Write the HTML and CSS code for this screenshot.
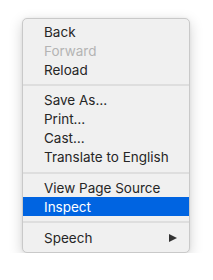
FILE: index.html
```html
<!DOCTYPE html>
<html>
<head>
<meta charset="utf-8">
<link rel="stylesheet" href="styles.css">
</head>
<body>
<div class="page">
  <div class="menu">
    <div class="item">Back</div>
    <div class="item disabled">Forward</div>
    <div class="item">Reload</div>
    <div class="sep"></div>
    <div class="item">Save As…</div>
    <div class="item">Print…</div>
    <div class="item">Cast…</div>
    <div class="item">Translate to English</div>
    <div class="sep"></div>
    <div class="item">View Page Source</div>
    <div class="item active">Inspect</div>
    <div class="sep"></div>
    <div class="item sub">Speech<span class="arrow"></span></div>
  </div>
</div>
</body>
</html>
```
FILE: styles.css
```css
html, body {
  margin: 0;
  padding: 0;
  background: #ffffff;
}
.page {
  padding: 18px 0 0 22px;
}
.menu {
  box-sizing: border-box;
  width: 168px;
  height: 235px;
  background: #f0f0f0;
  border: 1px solid #c9c9c9;
  border-radius: 5px;
  box-shadow: 0 4px 14px rgba(0, 0, 0, 0.18), 0 0 3px rgba(0, 0, 0, 0.06);
  padding: 3px 0 5px 0;
  font-family: Inter, "Liberation Sans", Arial, sans-serif;
  font-size: 13.5px;
  color: #262626;
  display: flex;
  flex-direction: column;
}
.item {
  height: 19px;
  line-height: 20px;
  padding-left: 21px;
  padding-right: 12px;
  display: flex;
  align-items: center;
  justify-content: space-between;
}
.disabled {
  color: #b4b4b4;
}
.active {
  background: #0064e1;
  color: #ffffff;
}
.sep {
  height: 12px;
  display: flex;
  align-items: center;
}
.sep::before {
  content: "";
  display: block;
  width: 100%;
  height: 2px;
  background: #dedede;
}
.arrow {
  width: 0;
  height: 0;
  border-top: 4.5px solid transparent;
  border-bottom: 4.5px solid transparent;
  border-left: 8px solid #333333;
}
```
